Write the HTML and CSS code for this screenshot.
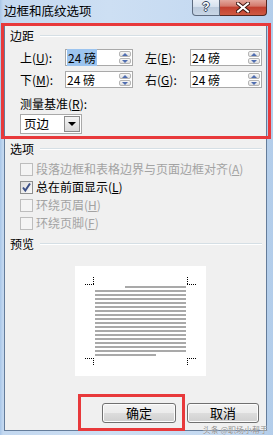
FILE: index.html
```html
<!DOCTYPE html>
<html lang="zh">
<head>
<meta charset="utf-8">
<title>边框和底纹选项</title>
<link rel="stylesheet" href="styles.css">
</head>
<body>
<div class="window">
  <div class="titlebar">
    <span class="title">边框和底纹选项</span>
    <div class="ctrls">
      <div class="btn-help">?</div>
      <div class="btn-close">
        <svg width="14" height="11" viewBox="0 0 14 11"><path d="M2 1.5 L12 9.5 M12 1.5 L2 9.5" stroke="#3a1510" stroke-width="4" stroke-linecap="square"/><path d="M2 1.5 L12 9.5 M12 1.5 L2 9.5" stroke="#fff" stroke-width="2" stroke-linecap="square"/></svg>
      </div>
    </div>
  </div>
  <div class="client">
    <section class="group g-margins">
      <div class="legend"><span>边距</span><i class="rule"></i></div>
      <div class="spin-grid">
        <label>上(<u>U</u>):</label>
        <div class="spin"><span class="val"><span class="sel">24 磅</span></span><span class="arrows"><b class="up"></b><b class="down"></b></span></div>
        <i></i>
        <label>左(<u>E</u>):</label>
        <div class="spin"><span class="val">24 磅</span><span class="arrows"><b class="up"></b><b class="down"></b></span></div>
        <label>下(<u>M</u>):</label>
        <div class="spin"><span class="val">24 磅</span><span class="arrows"><b class="up"></b><b class="down"></b></span></div>
        <i></i>
        <label>右(<u>G</u>):</label>
        <div class="spin"><span class="val">24 磅</span><span class="arrows"><b class="up"></b><b class="down"></b></span></div>
      </div>
      <div class="lbl">测量基准(<u>R</u>):</div>
      <div class="combo"><span>页边</span><b class="dd"></b></div>
    </section>

    <section class="group g-opts">
      <div class="legend"><span>选项</span><i class="rule"></i></div>
      <ul class="checks">
        <li class="disabled"><span class="cb"></span><span>段落边框和表格边界与页面边框对齐(<u>A</u>)</span></li>
        <li><span class="cb checked"><svg width="11" height="11" viewBox="0 0 11 11"><path d="M2 5.5 L4.3 8.5 L9 1.5" fill="none" stroke="#3b4f86" stroke-width="2"/></svg></span><span>总在前面显示(<u>L</u>)</span></li>
        <li class="disabled"><span class="cb"></span><span>环绕页眉(<u>H</u>)</span></li>
        <li class="disabled"><span class="cb"></span><span>环绕页脚(<u>F</u>)</span></li>
      </ul>
    </section>

    <section class="group g-preview">
      <div class="legend"><span>预览</span><i class="rule"></i></div>
      <div class="page">
        <svg width="131" height="110" viewBox="0 0 131 110">
          <g stroke="#000" stroke-width="1" stroke-dasharray="1 1" fill="none">
            <path d="M18.5 11 V19 M10 18.5 H19"/>
            <path d="M112.5 11 V19 M112 18.5 H121"/>
            <path d="M18.5 92 V100 M10 92.5 H19"/>
            <path d="M112.5 92 V100 M112 92.5 H121"/>
          </g>
          <g fill="#a9a9a9">
            <rect x="50" y="20" width="61" height="2"/>
            <rect x="20" y="24" width="91" height="2"/>
            <rect x="20" y="28" width="91" height="2"/>
            <rect x="20" y="32" width="91" height="2"/>
            <rect x="20" y="36" width="91" height="2"/>
            <rect x="20" y="40" width="91" height="2"/>
            <rect x="20" y="44" width="91" height="2"/>
            <rect x="20" y="48" width="91" height="2"/>
            <rect x="20" y="52" width="91" height="2"/>
            <rect x="20" y="56" width="91" height="2"/>
            <rect x="20" y="60" width="91" height="2"/>
            <rect x="20" y="64" width="91" height="2"/>
            <rect x="20" y="68" width="91" height="2"/>
            <rect x="20" y="72" width="91" height="2"/>
            <rect x="20" y="76" width="91" height="2"/>
            <rect x="20" y="80" width="91" height="2"/>
            <rect x="20" y="84" width="91" height="2"/>
            <rect x="20" y="88" width="61" height="2"/>
          </g>
        </svg>
      </div>
    </section>

    <div class="buttons">
      <button class="btn ok">确定</button>
      <button class="btn cancel">取消</button>
    </div>
  </div>

  <div class="annot annot-margins"></div>
  <div class="annot annot-ok"></div>
  <div class="watermark">头条 @职场小帮手</div>
</div>
</body>
</html>
```

FILE: styles.css
```css
* { box-sizing: border-box; margin: 0; padding: 0; }
html, body { width: 273px; height: 435px; overflow: hidden; }
body {
  font-family: "Noto Sans CJK SC", "Noto Sans", sans-serif;
  font-size: 12px;
  color: #000;
  background: #c6daf0;
}
u { text-decoration: underline; text-underline-offset: 1px; }

.window {
  position: relative;
  width: 273px;
  height: 435px;
  background: linear-gradient(to right, #a9c6e8 0, #c3d8f0 3px, #cddff3 40%, #c4d9f1 80%, #b3cdea 100%);
  display: flex;
  flex-direction: column;
}

.titlebar {
  height: 25px;
  display: flex;
  justify-content: space-between;
  align-items: flex-start;
  padding-left: 4px;
}
.title {
  font-size: 12.5px;
  line-height: 14px;
  margin-top: 4px;
  color: #000;
}
.ctrls { display: flex; margin-right: 6px; }
.btn-help {
  width: 28px;
  height: 16px;
  border: 1px solid #5d6c81;
  border-top: none;
  border-radius: 0 0 0 4px;
  background: linear-gradient(#e9eff7 0, #d6e1ee 45%, #bccbdd 50%, #c9d6e6 100%);
  color: #fff;
  font: bold 12px/14px "Liberation Sans", sans-serif;
  text-align: center;
  text-shadow: 1px 0 #34465e, -1px 0 #34465e, 0 1px #34465e, 0 -1px #34465e;
}
.btn-close {
  width: 47px;
  height: 16px;
  border: 1px solid #55271f;
  border-left: none;
  border-top: none;
  border-radius: 0 0 4px 0;
  background: linear-gradient(#e3a79d 0, #d47a6c 40%, #c2402f 50%, #cf5a43 100%);
  display: flex;
  align-items: center;
  justify-content: center;
}

.client {
  margin-left: 4px;
  width: 263px;
  height: 406px;
  border: 1px solid #647c9a;
  background: #f0f0f0;
  display: flex;
  flex-direction: column;
}

.group { padding-left: 5px; }
.legend {
  display: flex;
  align-items: center;
  gap: 6px;
  height: 14px;
  line-height: 14px;
  padding-right: 4px;
}
.legend .rule {
  flex: 1;
  height: 2px;
  border-top: 1px solid #d5dfe5;
  border-bottom: 1px solid #ffffff;
}

.g-margins { padding-top: 3px; }
.spin-grid {
  margin-top: 6px;
  padding-left: 10px;
  display: grid;
  grid-template-columns: 45px 68px 12px 45px 72px;
  grid-auto-rows: 17px;
  row-gap: 5px;
  align-items: center;
}
.spin-grid label { line-height: 14px; }
.spin {
  height: 17px;
  border: 1px solid #a9a9a9;
  background: #fff;
  display: flex;
  align-items: stretch;
}
.spin .val {
  flex: 1;
  padding-left: 1px;
  line-height: 15px;
  white-space: pre;
}
.sel { background: #9cc4ef; padding: 0 1px; }
.arrows {
  width: 13px;
  display: flex;
  flex-direction: column;
  gap: 1px;
  padding: 1px 1px 1px 0;
}
.arrows b {
  flex: 1;
  position: relative;
  border: 1px solid #b5b5b5;
  border-radius: 2px;
  background: linear-gradient(#f7f7f7, #dedede);
}
.arrows b::after {
  content: "";
  position: absolute;
  left: 2px;
  top: 1px;
  border-left: 3px solid transparent;
  border-right: 3px solid transparent;
}
.arrows .up::after { border-bottom: 3px solid #4f6db0; }
.arrows .down::after { border-top: 3px solid #4f6db0; }

.lbl {
  margin-top: 9px;
  padding-left: 10px;
  line-height: 14px;
}
.combo {
  margin: 3px 0 0 10px;
  width: 62px;
  height: 20px;
  border: 1px solid #a9a9a9;
  background: #fff;
  display: flex;
  justify-content: space-between;
  align-items: center;
  padding: 1px;
}
.combo span { padding-left: 2px; line-height: 16px; font-size: 12.5px; }
.combo .dd {
  width: 16px;
  height: 16px;
  border: 1px solid #8c8c8c;
  background: linear-gradient(#f4f4f4, #d9d9d9);
  display: flex;
  align-items: center;
  justify-content: center;
}
.combo .dd::after {
  content: "";
  border-left: 4px solid transparent;
  border-right: 4px solid transparent;
  border-top: 4px solid #000;
}

.g-opts { margin-top: 8px; }
.checks { list-style: none; margin-top: 4px; padding-left: 10px; }
.checks li {
  height: 18px;
  display: flex;
  align-items: center;
  gap: 3px;
  line-height: 14px;
}
.checks li.disabled { color: #a3a3a3; }
.cb {
  width: 13px;
  height: 13px;
  border: 1px solid #8e8f8f;
  background: linear-gradient(135deg, #dcdcdc, #fbfbfb);
  display: flex;
  align-items: center;
  justify-content: center;
}
.disabled .cb { border-color: #bdbdbd; background: #f4f4f4; }

.g-preview { margin-top: 5px; }
.page {
  margin: 15px 0 0 65px;
  width: 131px;
  height: 110px;
  background: #fff;
}
.page svg { display: block; }

.buttons {
  margin-top: 27px;
  display: flex;
  justify-content: flex-end;
  gap: 11px;
  padding-right: 7px;
}
.btn {
  height: 20px;
  border: 1px solid #707070;
  border-radius: 3px;
  background: linear-gradient(#f2f2f2 0, #ebebeb 50%, #dddddd 50%, #cfcfcf 100%);
  font-family: "Noto Sans CJK SC", sans-serif;
  font-size: 13px;
  line-height: 16px;
  color: #000;
  box-shadow: inset 0 0 0 1px #fcfcfc;
}
.ok { width: 74px; }
.cancel { width: 72px; }

.annot {
  position: absolute;
  border: 3px solid #e8393b;
  pointer-events: none;
}
.annot-margins { left: 1px; top: 23px; width: 270px; height: 116px; }
.annot-ok { left: 78px; top: 394px; width: 107px; height: 37px; }

.watermark {
  position: absolute;
  right: 5px;
  bottom: 1px;
  font-size: 8px;
  line-height: 9px;
  color: #8c8c8c;
  text-shadow: 0 0 1px #fff;
}
```
